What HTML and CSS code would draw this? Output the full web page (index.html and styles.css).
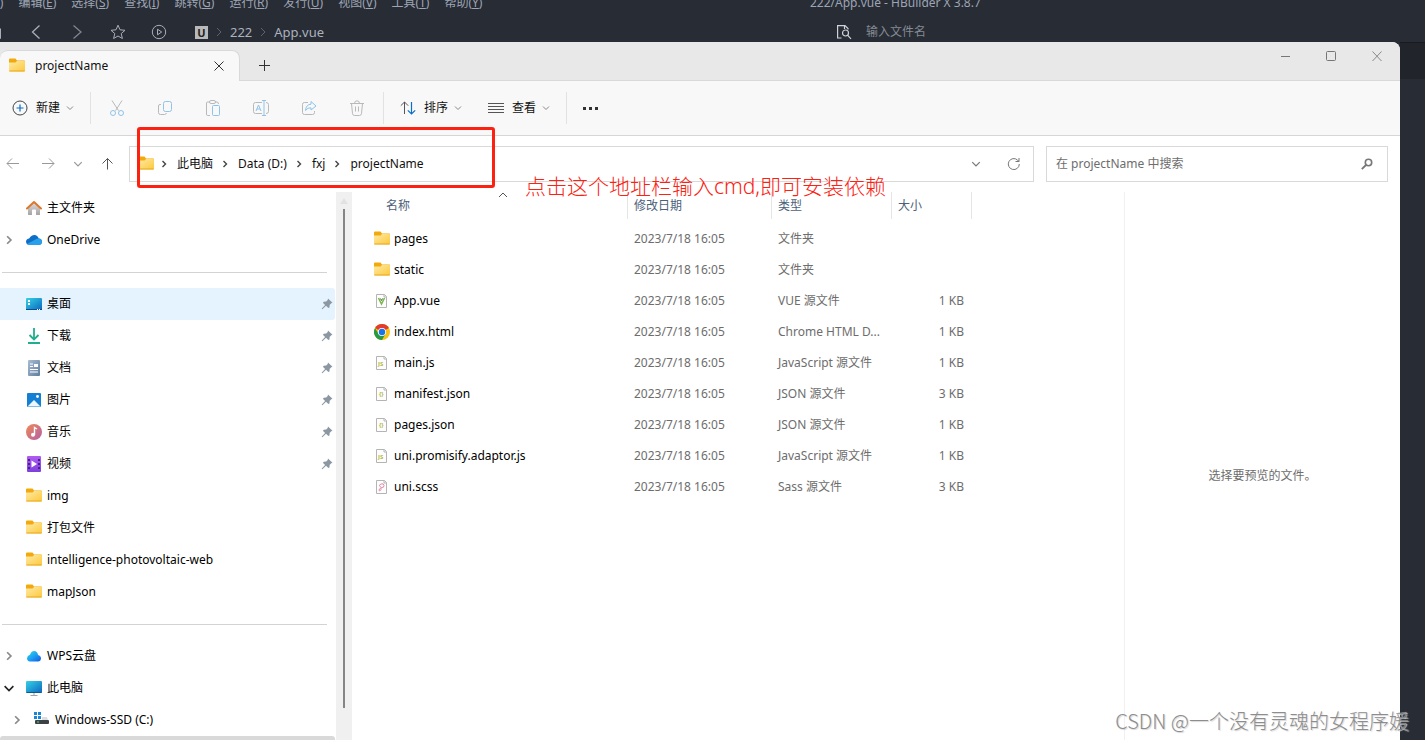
FILE: index.html
```html
<!DOCTYPE html>
<html lang="zh-CN">
<head>
<meta charset="utf-8">
<title>projectName</title>
<link rel="stylesheet" href="styles.css">
</head>
<body>
<svg class="defs" aria-hidden="true">
  <defs>
    <linearGradient id="g-folder" x1="0" y1="0" x2="1" y2="1"><stop offset="0" stop-color="#ffe9a6"/><stop offset="1" stop-color="#fcc93c"/></linearGradient>
    <linearGradient id="g-screen" x1="0" y1="0" x2="1" y2="1"><stop offset="0" stop-color="#34d3e4"/><stop offset="1" stop-color="#0d66c2"/></linearGradient>
    <linearGradient id="g-doc" x1="0" y1="0" x2="1" y2="1"><stop offset="0" stop-color="#a9bdd4"/><stop offset="1" stop-color="#5f7d9f"/></linearGradient>
    <linearGradient id="g-music" x1="0" y1="0" x2="1" y2="1"><stop offset="0" stop-color="#f08a55"/><stop offset="1" stop-color="#b25fa8"/></linearGradient>
    <linearGradient id="g-video" x1="0" y1="0" x2="0" y2="1"><stop offset="0" stop-color="#b05cf0"/><stop offset="1" stop-color="#7c3fdc"/></linearGradient>
    <linearGradient id="g-wps" x1="0" y1="0" x2="1" y2="1"><stop offset="0" stop-color="#2fe0d8"/><stop offset=".5" stop-color="#1ba0f5"/><stop offset="1" stop-color="#1457e0"/></linearGradient>
    <linearGradient id="g-home" x1="0" y1="0" x2="0" y2="1"><stop offset="0" stop-color="#dcdcdc"/><stop offset="1" stop-color="#a4a4a4"/></linearGradient>
  </defs>
  <symbol id="folder" viewBox="0 0 16 16">
    <path d="M0 1.500Q0 .5 1 .5H6.500L8 2.500H15.200Q16 2.500 16 3.300V8H0z" fill="#f2a90b"/>
    <path d="M0 4.500H6.500L8 3H15.200Q16 3 16 3.800V12.700Q16 13.500 15.200 13.500H.8Q0 13.500 0 12.700z" fill="url(#g-folder)"/>
    <path d="M.4 13H15.600" stroke="#e9a821" stroke-width="1"/>
  </symbol>
  <symbol id="pin" viewBox="0 0 12 12">
    <path d="M7 0.5L11.5 4.7 10.3 5.2 8.6 6.9 8.6 9.2 7.4 10 5 7.7 1.4 11.3.6 10.7 4.1 6.9 1.9 4.8 2.8 3.8 5.2 3.6 6.7 2.1z" fill="#8b98a1"/>
  </symbol>
  <symbol id="chev-down" viewBox="0 0 8 8"><path d="M1 2.5L4 5.5 7 2.5" fill="none" stroke="currentColor"/></symbol>
  <symbol id="chev-right" viewBox="0 0 8 8"><path d="M2.5 1L5.5 4 2.5 7" fill="none" stroke="currentColor" stroke-width="1.4"/></symbol>
  <symbol id="page" viewBox="0 0 16 16">
    <path d="M2.5 1.5H10.5L12.5 3.5V14.5H2.5z" fill="#fdfdfd" stroke="#b4b4b4"/>
    <path d="M10 1.5V4H12.5" fill="none" stroke="#b4b4b4"/>
  </symbol>
</svg>

<header class="ide">
  <div class="ide-top">
    <nav class="menu">
      <a href="#">文件(<u>F</u>)</a><a href="#">编辑(<u>E</u>)</a><a href="#">选择(<u>S</u>)</a><a href="#">查找(<u>I</u>)</a><a href="#">跳转(<u>G</u>)</a><a href="#">运行(<u>R</u>)</a><a href="#">发行(<u>U</u>)</a><a href="#">视图(<u>V</u>)</a><a href="#">工具(<u>T</u>)</a><a href="#">帮助(<u>Y</u>)</a>
    </nav>
    <span class="ide-title">222/App.vue - HBuilder X 3.8.7</span>
  </div>
  <div class="ide-bar">
    <div class="ide-tools">
      <button class="ide-btn" aria-label="保存"><svg width="16" height="16" viewBox="0 0 16 16"><path d="M1 2.500H12L14.500 5V14.500H1" fill="none" stroke="currentColor"/></svg></button>
      <button class="ide-btn" aria-label="后退"><svg width="16" height="16" viewBox="0 0 16 16"><path d="M11.500 1.500L4.500 8l7 6.500" fill="none" stroke="currentColor" stroke-width="1.300"/></svg></button>
      <button class="ide-btn dim" aria-label="前进"><svg width="16" height="16" viewBox="0 0 16 16"><path d="M4.500 1.500L12 8l-7.500 6.500" fill="none" stroke="currentColor" stroke-width="1.300"/></svg></button>
      <button class="ide-btn" aria-label="收藏"><svg width="16" height="16" viewBox="0 0 16 16"><path d="M8 1.200l2 4.600 5 .5-3.800 3.300 1.200 4.900L8 12l-4.400 2.500 1.200-4.900L1 6.300l5-.5z" fill="none" stroke="currentColor"/></svg></button>
      <button class="ide-btn" aria-label="运行"><svg width="16" height="16" viewBox="0 0 16 16" fill="none" stroke="currentColor"><circle cx="8" cy="8" r="6.700"/><path d="M6.500 5.200V10.800L10.700 8z"/></svg></button>
      <span class="crumbs"><span class="u-logo">U</span><svg width="8" height="12" viewBox="0 0 8 12"><path d="M2 2l4 4-4 4" fill="none" stroke="#5c6370"/></svg><a href="#">222</a><svg width="8" height="12" viewBox="0 0 8 12"><path d="M2 2l4 4-4 4" fill="none" stroke="#5c6370"/></svg><a href="#">App.vue</a></span>
    </div>
    <label class="ide-search"><svg width="16" height="16" viewBox="0 0 16 16" fill="none" stroke="#cfd2d8" stroke-width="1.200"><path d="M5.500 14H1.600V1.600H9L12 4.500V5.500"/><path d="M8.500 1.600V5"/><circle cx="9.500" cy="9" r="3"/><path d="M11.500 11.200L15 14.800"/></svg><input type="text" placeholder="输入文件名" aria-label="输入文件名"></label>
  </div>
</header>

<div class="desk">
<main class="window">
  <div class="titlebar">
    <div class="tab"><svg width="16" height="16"><use href="#folder"/></svg><span class="tab-name">projectName</span>
      <button aria-label="关闭标签页"><svg width="12" height="12" viewBox="0 0 12 12"><path d="M1.500 1.500l9 9M10.500 1.500l-9 9" stroke="#333"/></svg></button></div>
    <button class="newtab" aria-label="新标签页"><svg width="12" height="12" viewBox="0 0 12 12"><path d="M6.500 1v11M1 6.500h11" stroke="#333"/></svg></button>
    <div class="controls">
      <button aria-label="最小化"><svg width="12" height="12" viewBox="0 0 12 12"><path d="M2 6.500h9" stroke="#777"/></svg></button>
      <button aria-label="最大化"><svg width="12" height="12" viewBox="0 0 12 12"><rect x="1.500" y="1.500" width="9" height="9" rx="1" fill="none" stroke="#777"/></svg></button>
      <button aria-label="关闭"><svg width="12" height="12" viewBox="0 0 12 12"><path d="M1.500 1.500l9 9.500M10.500 1.500l-9 9.500" stroke="#888"/></svg></button>
    </div>
  </div>

  <div class="toolbar">
    <button class="cmd"><svg width="16" height="16" viewBox="0 0 16 16" fill="none"><circle cx="8" cy="8" r="7" stroke="#444"/><path d="M8 4.500v7M4.500 8h7" stroke="#0a6fc9" stroke-width="1.200"/></svg>新建<svg class="caret" width="8" height="8"><use href="#chev-down"/></svg></button>
    <i class="rule"></i>
    <div class="acts">
      <button disabled aria-label="剪切"><svg width="16" height="16" viewBox="0 0 16 16" fill="none"><path d="M3 .5l6.500 10.200M13 .5L6.500 10.700" stroke="#b9b9b9"/><circle cx="4" cy="13" r="2.500" stroke="#8fc3ea"/><circle cx="12" cy="13" r="2.500" stroke="#8fc3ea"/></svg></button>
      <button disabled aria-label="复制"><svg width="16" height="16" viewBox="0 0 16 16" fill="none"><path d="M4 4.500H3Q1.500 4.500 1.500 6V12.500Q1.500 14.500 3.500 14.500H7.500Q9 14.500 9.500 13" stroke="#b9b9b9"/><rect x="6.500" y="1.500" width="8" height="10" rx="2" stroke="#8fc3ea"/></svg></button>
      <button disabled aria-label="粘贴"><svg width="16" height="16" viewBox="0 0 16 16" fill="none"><path d="M5 15.500H2.500Q1.500 15.500 1.500 14V3Q1.500 2 2.500 2H4.500M10 2h2Q13.500 2 13.500 4" stroke="#b9b9b9"/><rect x="4.500" y=".5" width="6" height="3" rx="1.500" stroke="#b9b9b9"/><rect x="7.500" y="5.500" width="7" height="10" rx="1" stroke="#8fc3ea"/></svg></button>
      <button disabled aria-label="重命名"><svg width="16" height="16" viewBox="0 0 16 16" fill="none"><path d="M9 2.500H2.500Q.5 2.500.5 4.500V11.500Q.5 13.500 2.500 13.500H9M13 2.500Q15.500 2.500 15.500 4.500V11.500Q15.500 13.500 13 13.500" stroke="#b9b9b9"/><path d="M9 .5h4M11 .5v15M9 15.500h4M3 11L5.500 5 8 11M4 9h3" stroke="#8fc3ea"/></svg></button>
      <button disabled aria-label="共享"><svg width="16" height="16" viewBox="0 0 16 16" fill="none"><path d="M7 2.500H3.500Q1.500 2.500 1.500 4.500V12.500Q1.500 14.500 3.500 14.500H11.500Q13.500 14.500 13.500 12.500V11" stroke="#b9b9b9"/><path d="M10 1.500L15 6 10 10V7.800Q6.500 7.500 4.500 10.500 5 4.500 10 4.200z" stroke="#8fc3ea"/></svg></button>
      <button disabled aria-label="删除"><svg width="16" height="16" viewBox="0 0 16 16" fill="none" stroke="#b9b9b9"><path d="M1 3.500h14M5.500 3.500Q5.500.8 8 .8T10.500 3.500M2.500 3.500L3.500 13.500Q3.700 15.500 5.500 15.500H10.500Q12.300 15.500 12.500 13.500L13.500 3.500M6.500 6.500v5M9.500 6.500v5"/></svg></button>
    </div>
    <i class="rule"></i>
    <button class="cmd"><svg width="16" height="16" viewBox="0 0 16 16" fill="none"><path d="M4.500 14V2M.8 5.700L4.500 2l3.700 3.700" stroke="#555"/><path d="M11.500 2v12M7.800 10.300l3.700 3.700 3.700-3.700" stroke="#0a6fc9" stroke-width="1.200"/></svg>排序<svg class="caret" width="8" height="8"><use href="#chev-down"/></svg></button>
    <button class="cmd view"><svg width="16" height="16" viewBox="0 0 16 16"><path d="M0 3.500h16M0 6.500h16M0 9.500h16M0 12.500h16" stroke="#555"/></svg>查看<svg class="caret" width="8" height="8"><use href="#chev-down"/></svg></button>
    <i class="rule"></i>
    <button class="cmd" aria-label="查看更多"><svg width="16" height="16" viewBox="0 0 16 16"><path d="M0 7h3v3H0zM6 7h3v3H6zM12 7h3v3h-3z" fill="#333"/></svg></button>
  </div>

  <div class="addressrow">
    <div class="steps">
      <button aria-label="返回"><svg width="14" height="14" viewBox="0 0 14 14"><path d="M13 6.500H1M6 1.500L1 6.500l5 5" fill="none" stroke="#999"/></svg></button>
      <button aria-label="前进"><svg width="14" height="14" viewBox="0 0 14 14"><path d="M1 6.500h12M8 1.500l5 5-5 5" fill="none" stroke="#999"/></svg></button>
      <button class="recent" aria-label="最近位置"><svg width="10" height="10"><use href="#chev-down"/></svg></button>
      <button aria-label="向上"><svg width="14" height="14" viewBox="0 0 14 14"><path d="M6.500 12.500V1.500M1.500 6.500l5-5 5 5" fill="none" stroke="#555"/></svg></button>
    </div>
    <div class="address">
      <svg width="16" height="16"><use href="#folder"/></svg>
      <svg class="sep first" width="8" height="8"><use href="#chev-right"/></svg><a href="#">此电脑</a>
      <svg class="sep" width="8" height="8"><use href="#chev-right"/></svg><a href="#">Data (D:)</a>
      <svg class="sep" width="8" height="8"><use href="#chev-right"/></svg><a href="#">fxj</a>
      <svg class="sep" width="8" height="8"><use href="#chev-right"/></svg><a href="#">projectName</a>
      <span class="address-end">
        <button aria-label="以前的位置"><svg width="10" height="10"><use href="#chev-down"/></svg></button>
        <button aria-label="刷新"><svg width="14" height="14" viewBox="0 0 14 14" fill="none" stroke="#777"><path d="M12.300 7A5.500 5.500 0 1 1 10.500 3L12 4.500M12 1V4.500H8.500"/></svg></button>
      </span>
    </div>
    <label class="search"><input type="text" placeholder="在 projectName 中搜索" aria-label="搜索"><svg width="12" height="12" viewBox="0 0 12 12" fill="none" stroke="#777"><circle cx="7.500" cy="4.500" r="3.200" stroke-width="1.600"/><path d="M5 7L.8 11.200" stroke-width="1.800"/></svg></label>
    <div class="mark-box"></div>
    <div class="mark-text">点击这个地址栏输入cmd,即可安装依赖</div>
  </div>

  <div class="content">
    <nav class="side">
      <a href="#"><svg class="ic" viewBox="0 0 16 16"><path d="M2 8L8 2.500 14 8V14.500Q14 15 13.500 15H10V10.500Q10 9.500 9 9.500H7Q6 9.500 6 10.500V15H2.500Q2 15 2 14.500z" fill="url(#g-home)"/><path d="M1 8.500L8 2l7 6.500" fill="none" stroke="#e0762a" stroke-width="2" stroke-linecap="round" stroke-linejoin="round"/></svg>主文件夹</a>
      <a href="#"><svg class="tw" viewBox="0 0 8 8"><use href="#chev-right"/></svg><svg class="ic" viewBox="0 0 16 16"><path d="M3.500 13Q0 12.500 0 9.500 .3 6.800 3.200 6.500 5 3 8.500 3 11.500 3.200 12.700 6.500 16 6.800 16 10 15.700 13 12.500 13z" fill="#0f6fc8"/><path d="M3.500 13Q2 13 1 12L9.500 7.500Q10.800 6.500 12.700 6.500 16 6.800 16 10 15.700 13 12.500 13z" fill="#28a0ea"/></svg>OneDrive</a>
      <hr>
      <a href="#" class="on"><svg class="ic" viewBox="0 0 16 16"><rect y="2" width="16" height="12" rx="1" fill="url(#g-screen)"/><path d="M2 4h2v2H2zM2 7h2v2H2z" fill="#fff"/><path d="M0 13h16v1H0z" fill="#0a4c8c"/><path d="M11 13h1v1h-1zM13 13h1v1h-1z" fill="#fff"/></svg>桌面<svg class="pin"><use href="#pin"/></svg></a>
      <a href="#"><svg class="ic" viewBox="0 0 16 16"><path d="M8 0V11M3.500 7L8 11.500 12.500 7M2 15H14" fill="none" stroke="#1fae8e" stroke-width="1.800"/></svg>下载<svg class="pin"><use href="#pin"/></svg></a>
      <a href="#"><svg class="ic" viewBox="0 0 16 16"><rect x="2" width="12" height="16" rx="1" fill="url(#g-doc)"/><path d="M4 4h3M4 6.500h3M4 9.500h8M4 12h8" stroke="#fff"/><path d="M8 4h4v3H8z" fill="#fff"/></svg>文档<svg class="pin"><use href="#pin"/></svg></a>
      <a href="#"><svg class="ic" viewBox="0 0 16 16"><rect x="1" y="1" width="14" height="14" rx="1" fill="#1480d4"/><path d="M1.500 14.500L8 8l6.500 6.500z" fill="#eef6fd"/><circle cx="11.500" cy="4.500" r="1.400" fill="#fff"/></svg>图片<svg class="pin"><use href="#pin"/></svg></a>
      <a href="#"><svg class="ic" viewBox="0 0 16 16"><circle cx="8" cy="8" r="8" fill="url(#g-music)"/><circle cx="7" cy="10.800" r="2" fill="#fff"/><path d="M8.500 11V3.500l2.500 1.500" fill="none" stroke="#fff" stroke-width="1.400"/></svg>音乐<svg class="pin"><use href="#pin"/></svg></a>
      <a href="#"><svg class="ic" viewBox="0 0 16 16"><rect x="1" width="14" height="16" rx="1" fill="url(#g-video)"/><path d="M2 3h2v2H2zM2 7h2v2H2zM2 11h2v2H2zM12 3h2v2h-2zM12 7h2v2h-2zM12 11h2v2h-2z" fill="#4b1c93"/><path d="M5.500 4.500V11.500L11 8z" fill="#fff"/></svg>视频<svg class="pin"><use href="#pin"/></svg></a>
      <a href="#"><svg class="ic"><use href="#folder"/></svg>img</a>
      <a href="#"><svg class="ic"><use href="#folder"/></svg>打包文件</a>
      <a href="#"><svg class="ic"><use href="#folder"/></svg>intelligence-photovoltaic-web</a>
      <a href="#"><svg class="ic"><use href="#folder"/></svg>mapJson</a>
      <hr>
      <a href="#"><svg class="tw" viewBox="0 0 8 8"><use href="#chev-right"/></svg><svg class="ic" viewBox="0 0 16 16"><path d="M4 13.500Q1 13 1 10.200 1.200 7.500 4 6.800 5 3 8.200 3 11.500 3.300 12 7 15 7.500 15 10.500 14.700 13.500 12 13.500z" fill="url(#g-wps)"/></svg>WPS云盘</a>
      <a href="#"><svg class="tw open" viewBox="0 0 8 8"><path d="M.5 2.500L4 6 7.500 2.500" fill="none" stroke="#222" stroke-width="1.300"/></svg><svg class="ic" viewBox="0 0 16 16"><rect y="1" width="16" height="12" rx="1" fill="url(#g-screen)"/><path d="M.5 12.500h15" stroke="#0b5a8c"/><path d="M8 13v2M4.500 15.500h7" stroke="#9aa3ab"/></svg>此电脑</a>
      <a href="#" class="child"><svg class="tw" viewBox="0 0 8 8"><use href="#chev-right"/></svg><svg class="ic" viewBox="0 0 16 16"><path d="M1 0h3v3H1zM5 0h3v3H5zM1 4h3v3H1zM5 4h3v3H5z" fill="#1a86d9"/><path d="M9 5h5l1 3H9z" fill="#dedede"/><rect x="2" y="8" width="14" height="4" rx="1" fill="#3c4146"/><path d="M4 10h2" stroke="#4ddc6b"/></svg>Windows-SSD (C:)</a>
      <div class="next"></div>
    </nav>
    <div class="scroll"><i class="up"></i><i class="thumb"></i></div>

    <section class="files">
      <table>
        <colgroup><col class="c-name"><col class="c-date"><col class="c-type"><col class="c-size"></colgroup>
        <thead><tr><th>名称<svg class="asc" width="10" height="6" viewBox="0 0 10 6"><path d="M1 5l4-4 4 4" fill="none" stroke="#555"/></svg></th><th>修改日期</th><th>类型</th><th>大小</th></tr></thead>
        <tbody>
          <tr><td><a href="#"><svg class="ic"><use href="#folder"/></svg>pages</a></td><td>2023/7/18 16:05</td><td>文件夹</td><td></td></tr>
          <tr><td><a href="#"><svg class="ic"><use href="#folder"/></svg>static</a></td><td>2023/7/18 16:05</td><td>文件夹</td><td></td></tr>
          <tr><td><a href="#"><svg class="ic" viewBox="0 0 16 16"><use href="#page"/><path d="M4.500 5L7.500 11 10.500 5" fill="none" stroke="#7db84e" stroke-width="1.600"/><path d="M6.500 5.500L7.500 7.500 8.500 5.500" fill="none" stroke="#4d6a45"/></svg>App.vue</a></td><td>2023/7/18 16:05</td><td>VUE 源文件</td><td>1 KB</td></tr>
          <tr><td><a href="#"><svg class="ic" viewBox="0 0 16 16"><circle cx="8" cy="8" r="8" fill="#fbc116"/><path d="M8 8L1.070 4A8 8 0 0 1 14.930 4z" fill="#e33b2e"/><path d="M1.070 4A8 8 0 0 0 8 16L11.500 10 8 8 4.500 10z" fill="#269a47"/><circle cx="8" cy="8" r="4" fill="#fff"/><circle cx="8" cy="8" r="3.200" fill="#1a73e8"/></svg>index.html</a></td><td>2023/7/18 16:05</td><td>Chrome HTML D...</td><td>1 KB</td></tr>
          <tr><td><a href="#"><svg class="ic" viewBox="0 0 16 16"><use href="#page"/><text class="js" x="4" y="11">JS</text></svg>main.js</a></td><td>2023/7/18 16:05</td><td>JavaScript 源文件</td><td>1 KB</td></tr>
          <tr><td><a href="#"><svg class="ic" viewBox="0 0 16 16"><use href="#page"/><text class="js" x="5" y="10">{}</text></svg>manifest.json</a></td><td>2023/7/18 16:05</td><td>JSON 源文件</td><td>3 KB</td></tr>
          <tr><td><a href="#"><svg class="ic" viewBox="0 0 16 16"><use href="#page"/><text class="js" x="5" y="10">{}</text></svg>pages.json</a></td><td>2023/7/18 16:05</td><td>JSON 源文件</td><td>1 KB</td></tr>
          <tr><td><a href="#"><svg class="ic" viewBox="0 0 16 16"><use href="#page"/><text class="js" x="4" y="11">JS</text></svg>uni.promisify.adaptor.js</a></td><td>2023/7/18 16:05</td><td>JavaScript 源文件</td><td>1 KB</td></tr>
          <tr><td><a href="#"><svg class="ic" viewBox="0 0 16 16"><use href="#page"/><path d="M6.500 8Q4 6 7 5T10 6.500 7.500 8.500Q4.500 10 5 11.500T7 10.500V8.500" fill="none" stroke="#e58aa6"/></svg>uni.scss</a></td><td>2023/7/18 16:05</td><td>Sass 源文件</td><td>3 KB</td></tr>
        </tbody>
      </table>
    </section>
    <aside class="preview">选择要预览的文件。</aside>
  </div>
</main>
<div class="edge"></div>
</div>
<div class="watermark">CSDN @一个没有灵魂的女程序媛</div>
</body>
</html>
```
FILE: styles.css
```css
* { box-sizing: border-box; }
body {
  margin: 0;
  height: 100vh;
  overflow: hidden;
  display: flex;
  flex-direction: column;
  position: relative;
  background: #282c34;
  color: #111;
  font: 12px/16px "Noto Sans", "Noto Sans CJK SC", sans-serif;
}
a { color: inherit; text-decoration: none; }
button { border: 0; padding: 0; background: none; font: inherit; color: inherit; display: flex; align-items: center; justify-content: center; }
input { border: 0; padding: 0; background: none; font: inherit; outline: 0; flex: 1; min-width: 0; }
svg { display: block; flex: none; }
.defs { position: absolute; width: 0; height: 0; }

/* editor behind the window */
.ide { flex: none; color: #9da5b4; }
.ide-top { display: flex; height: 12px; margin-top: -5px; }
.menu { flex: 0 0 844px; display: flex; gap: 15px; margin-left: -34px; }
.menu a, .ide-title { white-space: nowrap; }
.ide-bar { display: flex; height: 35px; padding-top: 15px; align-items: center; }
.ide-tools { flex: 0 0 836px; display: flex; align-items: center; }
.ide-btn { width: 41px; color: #a9afba; }
.ide-btn:first-child { width: 16px; margin-left: -14px; margin-right: 13px; }
.ide-btn.dim { color: #7f8693; }
.crumbs { display: flex; align-items: center; gap: 7px; font-size: 13px; margin-left: 16px; color: #abb2bf; }
.u-logo { width: 13px; height: 13px; background: #b9b9b9; color: #222; font-weight: 700; font-size: 11px; line-height: 13px; text-align: center; }
.ide-search { display: flex; align-items: center; gap: 14px; }
.ide-search input::placeholder { color: #848a95; }

.desk { flex: 1; min-height: 0; display: flex; }
.edge { width: 25px; border-top: 1px solid #181a1f; background: linear-gradient(#21252b 36px, #282c34 36px); }
.window { flex: 1; min-width: 0; display: flex; flex-direction: column; background: #fff; border-radius: 0 8px 0 0; }

.titlebar { display: flex; flex: none; height: 39px; background: #e8e8e8; border-bottom: 1px solid #d9d9d9; border-radius: 0 8px 0 0; }
.tab { display: flex; align-items: center; width: 240px; height: 31px; margin-top: 8px; padding: 0 14px 0 9px; gap: 10px; background: #f8f8f8; border: solid #d9d9d9; border-width: 1px 1px 0 0; border-radius: 8px 8px 0 0; }
.tab-name { flex: 1; }
.newtab { width: 48px; padding-top: 8px; }
.controls { margin-left: auto; display: flex; height: 28px; }
.controls button { width: 46px; }

.toolbar { display: flex; flex: none; align-items: center; height: 55px; padding-left: 12px; background: #f8f8f8; border-bottom: 1px solid #d6d6d6; }
.cmd { gap: 8px; }
.cmd.view { margin-left: 26px; }
.caret { margin-left: -2px; color: #888; }
.rule { width: 1px; height: 32px; margin: 0 16px; background: #e2e2e2; }
.acts { display: flex; margin: 0 -14px; }
.acts button { width: 48px; }

.addressrow { position: relative; display: flex; align-items: center; height: 56px; padding-right: 12px; flex: none; }
.steps { display: grid; grid-template-columns: 26px 44px 16px 43px; }
.recent { color: #999; }
.address { flex: 1; display: flex; align-items: center; height: 36px; padding: 0 12px 0 8px; border: 1px solid #d9d9d9; }
.sep { margin: 0 9px 0 8px; color: #444; }
.sep.first { margin-left: 6px; }
.address-end { margin-left: auto; display: flex; color: #777; }
.address-end button { width: 38px; height: 20px; }
.address-end button:last-child { width: 14px; margin-left: 12px; }
.search { flex: 0 0 342px; display: flex; align-items: center; height: 36px; margin-left: 12px; padding: 0 14px 0 9px; border: 1px solid #d9d9d9; }
.search input::placeholder { color: #6d6d6d; }
.mark-box { position: absolute; left: 137px; top: -9px; width: 358px; height: 61px; border: 3px solid #fc2111; border-radius: 3px; }
.mark-text { position: absolute; left: 525px; top: 37px; color: #fc2111; font-size: 21px; line-height: 26px; font-family: "Noto Sans", "Noto Sans CJK SC", sans-serif; font-weight: 300; white-space: nowrap; z-index: 1; }

.content { flex: 1; min-height: 0; display: flex; overflow: hidden; }
.side { width: 336px; flex: none; color: #000; }
.side a { display: flex; align-items: center; height: 32px; padding: 0 2px 0 26px; margin-right: 1px; gap: 5px; position: relative; }
.side a.child { padding-left: 33px; gap: 6px; }
.side .on { background: #e5f3ff; border-radius: 0 3px 3px 0; }
.side hr { margin: 16px 9px 15px 2px; border: 0; height: 1px; background: #d3d3d3; }
.ic { width: 16px; height: 16px; }
.tw { position: absolute; left: 4px; top: 11px; width: 10px; height: 10px; color: #8a8a8a; }
.child .tw { left: 12px; }
.pin { width: 12px; height: 12px; margin-left: auto; }
.next { height: 20px; margin-right: 1px; background: #d9d9d9; border-radius: 3px 3px 0 0; }
.scroll { width: 16px; flex: none; display: flex; flex-direction: column; align-items: center; background: #f0f0f0; }
.up { border: 4px solid transparent; border-top: 0; border-bottom: 6px solid #e2e2e2; margin: 6px 0 5px; }
.thumb { width: 2px; flex: 0 0 91%; background: #858585; }

.files { flex: 1; min-width: 0; padding-left: 14px; }
table { width: 606px; table-layout: fixed; border-collapse: separate; border-spacing: 0; }
.c-name { width: 262px; }
.c-date { width: 144px; }
.c-type { width: 120px; }
.c-size { width: 80px; }
th { position: relative; height: 27px; padding: 0 0 0 6px; text-align: left; font-weight: 400; color: #4c607a; border-right: 1px solid #e5e5e5; }
th:first-child { padding-left: 20px; }
.asc { position: absolute; left: 132px; top: 0; }
td { height: 31px; padding: 0 0 0 6px; color: #6d6d6d; white-space: nowrap; }
td:first-child { padding-left: 8px; color: #000; }
td:last-child { text-align: right; padding-right: 8px; }
td a { display: flex; align-items: center; gap: 4px; }
tbody::before { content: ""; display: block; height: 4px; }
.js { font: 700 6px "Noto Sans", sans-serif; fill: #b5b840; }

.preview { flex: 0 0 276px; display: flex; align-items: center; justify-content: center; padding-top: 20px; border-left: 1px solid #f0f0f0; color: #6d6d6d; }
.watermark { position: absolute; right: 16px; bottom: 6px; font: 300 20px/26px "Noto Sans CJK SC", sans-serif; color: #8d8d8d; text-shadow: 1px 1px 1px #d5d5d5; z-index: 2; }
```
